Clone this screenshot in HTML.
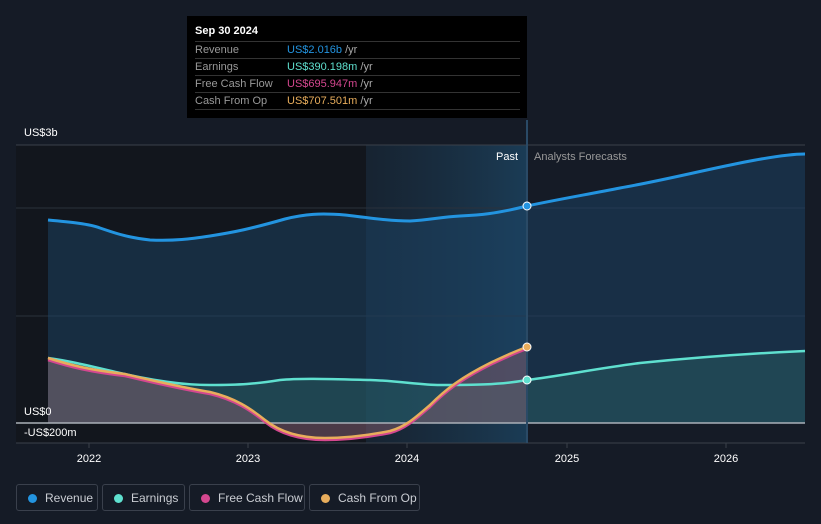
<!DOCTYPE html>
<html><head><meta charset="utf-8"><style>
body{margin:0;width:821px;height:524px;background:#151b26;font-family:"Liberation Sans",sans-serif;overflow:hidden;position:relative}
.tip{position:absolute;left:187px;top:16px;width:340px;height:102px;background:#000;color:#fff;font-size:11px}
.tip .h{position:absolute;left:8px;top:9px;font-weight:bold}
.row{position:absolute;left:8px;width:325px;height:17px;border-top:1px solid #333;line-height:17px}
.row .l{color:#999;position:absolute;left:0}
.row .v{position:absolute;left:92px}
.yr{color:#aaa}
.leg{position:absolute;top:484px;height:27px;border:1px solid #3a404c;border-radius:3px;color:#c9ccd2;font-size:12px;line-height:27px;box-sizing:border-box}
.leg i{position:absolute;left:11px;top:9px;width:9px;height:9px;border-radius:50%}
.leg span{position:absolute;left:28px}
</style></head><body>
<svg width="821" height="524" style="position:absolute;left:0;top:0">
<defs>
<linearGradient id="pg" x1="0" x2="1" y1="0" y2="0"><stop offset="0" stop-color="#1a3347" stop-opacity="0.35"/><stop offset="1" stop-color="#1d4a6a" stop-opacity="0.7"/></linearGradient>
</defs>
<rect x="16" y="145" width="350" height="298" fill="#12161d"/>
<rect x="366" y="145" width="161" height="298" fill="url(#pg)"/>
<line x1="16" y1="145" x2="805" y2="145" stroke="#3a404a"/>
<line x1="16" y1="208" x2="805" y2="208" stroke="#2a313c"/>
<line x1="16" y1="316" x2="805" y2="316" stroke="#2a313c"/>
<path d="M48,220 C70,222 90,224 100,228 C115,233 125,237 150,240 C175,241 190,239 210,236 C235,232 250,229 285,219 C305,214 320,213 345,215 C370,218 390,221 410,221 C430,220 440,217 460,216 C480,215 495,214 527,206 C560,199 590,194 620,188 C660,181 700,171 740,163 C770,157 790,154 805,154 L805,423 L48,423 Z" fill="#1b4466" fill-opacity="0.5"/>
<path d="M48,358 C70,361 90,366 120,373 C150,380 180,385 210,385 C240,385 255,384 280,380 C300,378 330,379 370,380 C400,381 420,385 440,385 C470,385 500,385 527,380 C560,376 600,368 640,363 C700,357 760,353 805,351 L805,423 L48,423 Z" fill="#2a6466" fill-opacity="0.45"/>
<path d="M48,358 C70,365 90,370 125,374 C150,380 180,387 210,392 C235,398 250,408 265,420 C280,432 300,438 325,438 C350,438 370,435 390,431 C405,427 415,418 430,405 C445,390 460,378 490,363 C505,356 515,351 527,347 L527,423 L48,423 Z" fill="#7a5a6a" fill-opacity="0.55"/>
<line x1="16" y1="423" x2="805" y2="423" stroke="#aab0b8" stroke-width="1.5"/>
<line x1="16" y1="443" x2="805" y2="443" stroke="#3a404a"/>
<g stroke="#3a404a"><line x1="89" y1="443" x2="89" y2="448"/><line x1="248" y1="443" x2="248" y2="448"/><line x1="407" y1="443" x2="407" y2="448"/><line x1="567" y1="443" x2="567" y2="448"/><line x1="726" y1="443" x2="726" y2="448"/></g>
<line x1="527" y1="120" x2="527" y2="443" stroke="#2a4a66" stroke-width="2"/>
<path d="M48,220 C70,222 90,224 100,228 C115,233 125,237 150,240 C175,241 190,239 210,236 C235,232 250,229 285,219 C305,214 320,213 345,215 C370,218 390,221 410,221 C430,220 440,217 460,216 C480,215 495,214 527,206 C560,199 590,194 620,188 C660,181 700,171 740,163 C770,157 790,154 805,154" fill="none" stroke="#2394e0" stroke-width="3"/>
<path d="M48,358 C70,361 90,366 120,373 C150,380 180,385 210,385 C240,385 255,384 280,380 C300,378 330,379 370,380 C400,381 420,385 440,385 C470,385 500,385 527,380 C560,376 600,368 640,363 C700,357 760,353 805,351" fill="none" stroke="#5fe0cf" stroke-width="2.5"/>
<path d="M48,360 C70,367 90,372 125,376 C150,382 180,389 210,394 C235,400 250,410 265,422 C280,434 300,440 325,440 C350,440 370,437 390,433 C405,429 415,420 430,407 C445,392 460,380 490,365 C505,358 515,353 527,349" fill="none" stroke="#d4478f" stroke-width="2.5"/>
<path d="M48,358 C70,365 90,370 125,374 C150,380 180,387 210,392 C235,398 250,408 265,420 C280,432 300,438 325,438 C350,438 370,435 390,431 C405,427 415,418 430,405 C445,390 460,378 490,363 C505,356 515,351 527,347" fill="none" stroke="#e8ad5c" stroke-width="2.5"/>
<circle cx="527" cy="206" r="4" fill="#2394e0" stroke="#fff" stroke-width="1"/>
<circle cx="527" cy="380" r="4" fill="#5fe0cf" stroke="#fff" stroke-width="1"/>
<circle cx="527" cy="347" r="4" fill="#e8ad5c" stroke="#fff" stroke-width="1"/>
<g font-size="11" fill="#fff" font-family="Liberation Sans,sans-serif">
<text x="24" y="136">US$3b</text>
<text x="24" y="415">US$0</text>
<text x="24" y="436">-US$200m</text>
<text x="518" y="160" text-anchor="end">Past</text>
<text x="534" y="160" fill="#999">Analysts Forecasts</text>
<text x="89" y="462" text-anchor="middle">2022</text>
<text x="248" y="462" text-anchor="middle">2023</text>
<text x="407" y="462" text-anchor="middle">2024</text>
<text x="567" y="462" text-anchor="middle">2025</text>
<text x="726" y="462" text-anchor="middle">2026</text>
</g>
</svg>
<div class="tip">
<div class="h">Sep 30 2024</div>
<div class="row" style="top:25px"><span class="l">Revenue</span><span class="v"><span style="color:#2394e0">US$2.016b</span> <span class="yr">/yr</span></span></div>
<div class="row" style="top:42px"><span class="l">Earnings</span><span class="v"><span style="color:#5fe0cf">US$390.198m</span> <span class="yr">/yr</span></span></div>
<div class="row" style="top:59px"><span class="l">Free Cash Flow</span><span class="v"><span style="color:#d4478f">US$695.947m</span> <span class="yr">/yr</span></span></div>
<div class="row" style="top:76px"><span class="l">Cash From Op</span><span class="v"><span style="color:#e8ad5c">US$707.501m</span> <span class="yr">/yr</span></span></div>
<div class="row" style="top:93px;height:0"></div>
</div>
<div class="leg" style="left:16px;width:82px"><i style="background:#2394e0"></i><span>Revenue</span></div>
<div class="leg" style="left:102px;width:83px"><i style="background:#5fe0cf"></i><span>Earnings</span></div>
<div class="leg" style="left:189px;width:116px"><i style="background:#d4478f"></i><span>Free Cash Flow</span></div>
<div class="leg" style="left:309px;width:111px"><i style="background:#e8ad5c"></i><span>Cash From Op</span></div>
</body></html>
